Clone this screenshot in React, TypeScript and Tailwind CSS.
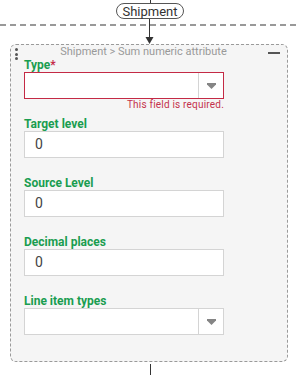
import React from "react";

function Caret() {
  return (
    <svg width="9" height="6" viewBox="0 0 9 6">
      <path d="M0 0 H9 V1.5 L4.5 6 L0 1.5 Z" fill="#858585" />
    </svg>
  );
}

function Select({ error }: { error?: boolean }) {
  return (
    <div
      className={`flex h-[27px] w-[200px] bg-white border ${
        error ? "border-[#c42a45]" : "border-[#d4d4d4]"
      }`}
    >
      <div className="flex-1" />
      <div className="w-[25px] flex items-center justify-center border-l border-[#d4d4d4]">
        <Caret />
      </div>
    </div>
  );
}

function Input({ value }: { value: string }) {
  return (
    <div className="flex items-center h-[27px] w-[200px] bg-white border border-[#d4d4d4] pl-[10px] text-[14px] text-[#444]">
      {value}
    </div>
  );
}

function Label({ children }: { children: React.ReactNode }) {
  return (
    <div className="text-[12px] leading-[14px] font-bold text-[#1a9d50]">{children}</div>
  );
}

export default function App() {
  return (
    <div
      className="w-[300px] h-[375px] bg-white relative overflow-hidden"
      style={{ fontFamily: "Roboto, 'Noto Sans', sans-serif" }}
    >
      {/* connectors */}
      <div className="flex flex-col items-center">
        <div className="w-px h-[3px] bg-[#333]" />
        <div className="h-[16px] px-[5px] rounded-full border border-[#555] flex items-center text-[13px] leading-none text-[#333]">
          Shipment
        </div>
        <svg width="300" height="25" viewBox="0 0 300 25" className="block">
          <line x1="0" y1="6" x2="300" y2="6" stroke="#999" strokeWidth="2" strokeDasharray="6 4" />
          <line x1="149.5" y1="0" x2="149.5" y2="19" stroke="#333" strokeWidth="1" />
          <path d="M145.5 18 H153.5 L149.5 25 Z" fill="#333" />
        </svg>
      </div>

      {/* card */}
      <div className="ml-[10px] w-[278px] h-[318px] bg-[#f5f5f5] border border-dashed border-[#9a9a9a] rounded-[6px] relative pl-[13px]">
        <div className="absolute left-[4px] top-[3px] flex flex-col gap-[1.5px]">
          <div className="w-[3px] h-[3px] rounded-full bg-[#555]" />
          <div className="w-[3px] h-[3px] rounded-full bg-[#555]" />
          <div className="w-[3px] h-[3px] rounded-full bg-[#555]" />
        </div>
        <div className="absolute right-[7px] top-[7px] w-[12px] h-[2px] bg-[#555]" />
        <div className="h-[13px] flex items-center justify-center pr-[24px] text-[11px] leading-[13px] text-[#999]">
          <span>Shipment &gt; Sum numeric attribute</span>
        </div>
        <Label>
          Type<span className="text-[#c42a45]">*</span>
        </Label>
        <Select error />
        <div className="w-[200px] text-right text-[10px] leading-[12px] text-[#c4314b] tracking-[0.2px]">
          This field is required.
        </div>

        <div className="mt-[6px]">
          <Label>Target level</Label>
          <Input value="0" />
        </div>
        <div className="mt-[18px]">
          <Label>Source Level</Label>
          <Input value="0" />
        </div>
        <div className="mt-[18px]">
          <Label>Decimal places</Label>
          <Input value="0" />
        </div>
        <div className="mt-[18px]">
          <Label>Line item types</Label>
          <Select />
        </div>
      </div>

      <div className="flex justify-center mt-[2px]">
        <div className="w-px h-[14px] bg-[#333]" />
      </div>
    </div>
  );
}
